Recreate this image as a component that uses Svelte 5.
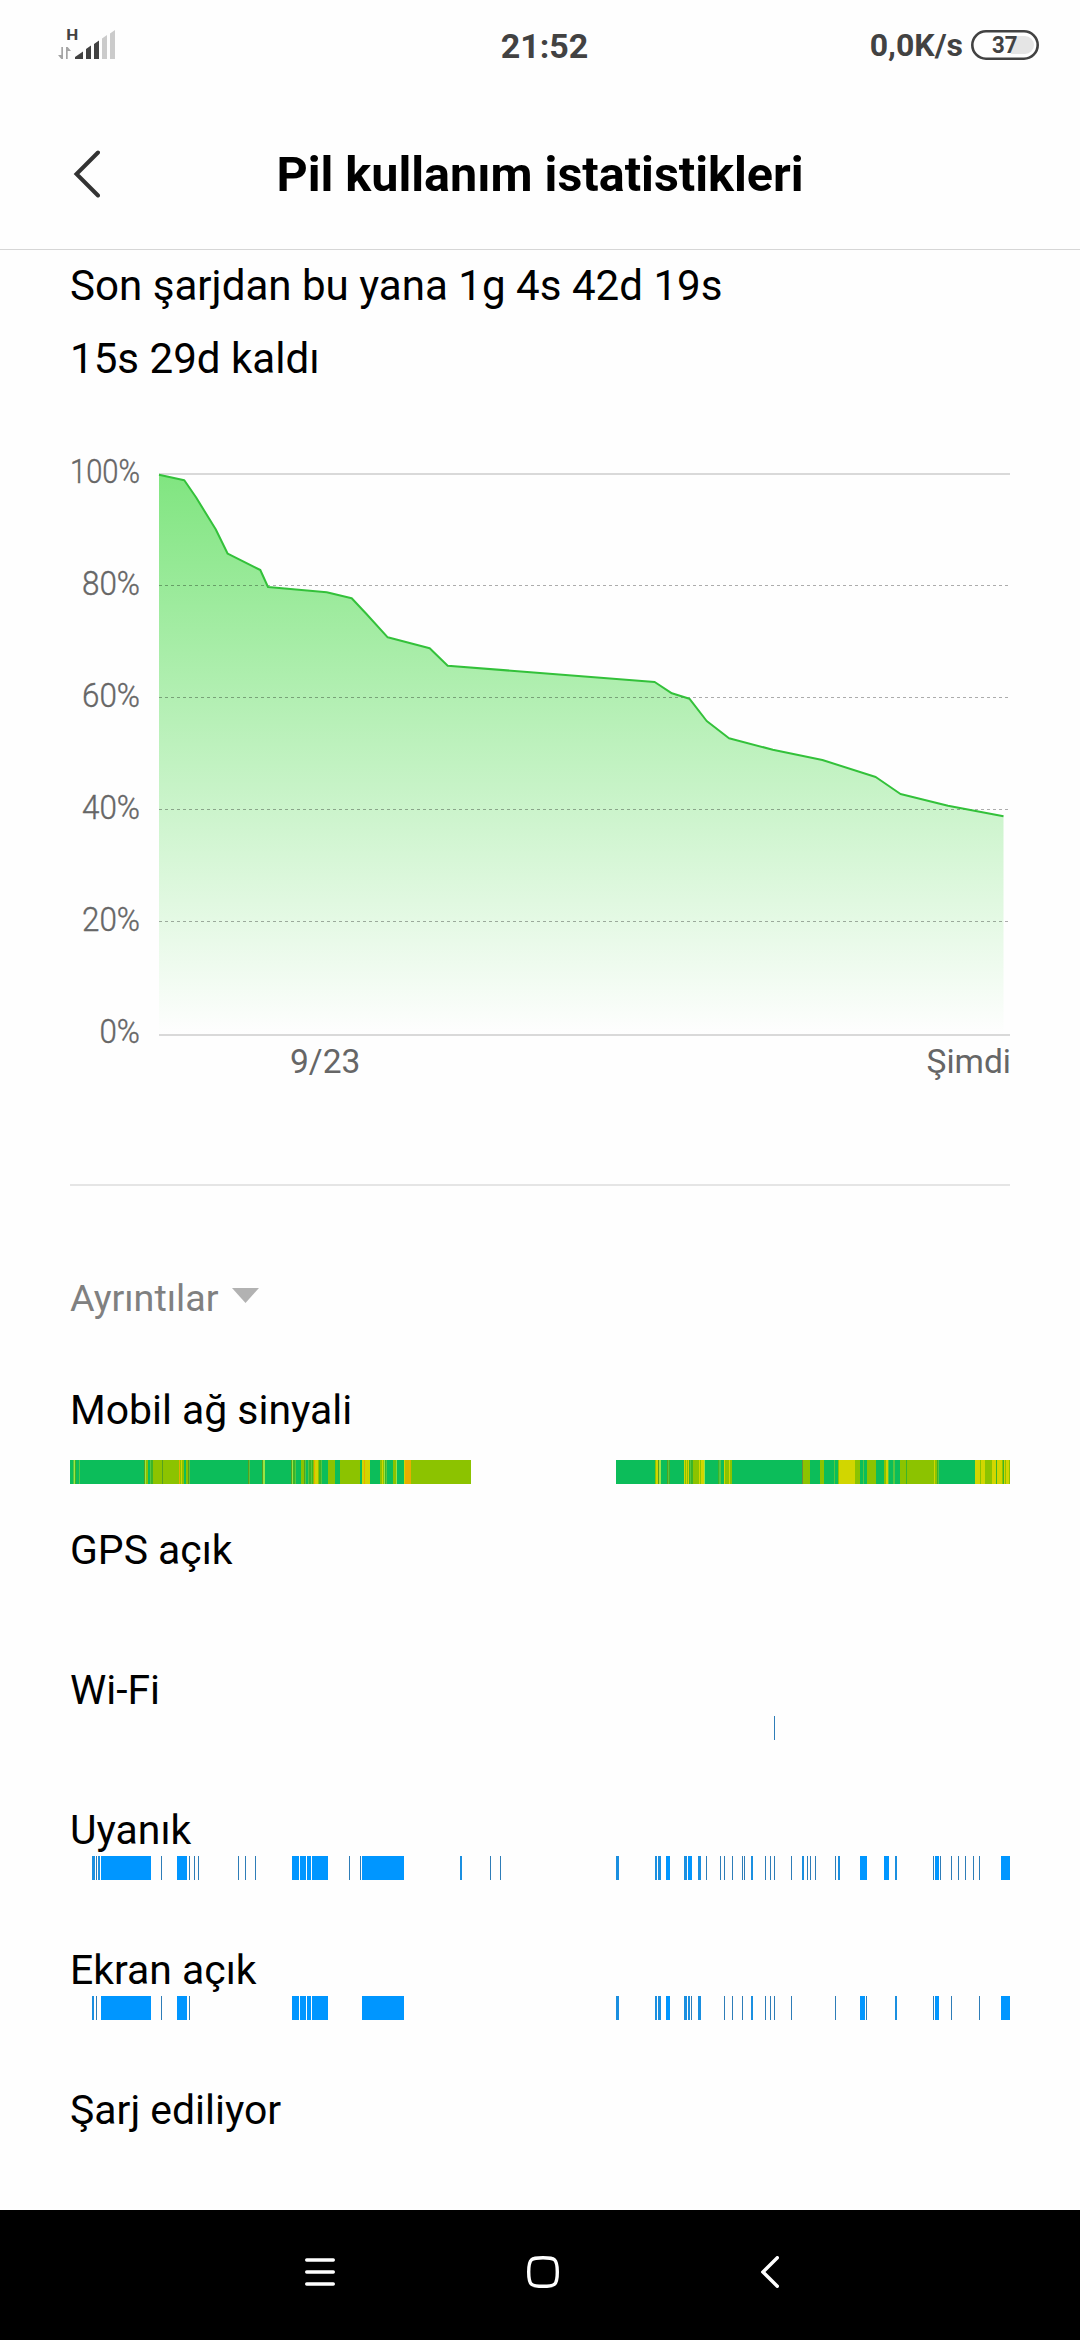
<script>
  const levels = [100, 80, 60, 40, 20, 0];

  // battery level over time, chart pixels
  const history = [
    [0, 1.7], [25.3, 7.3], [37, 24.3], [56.7, 56.3], [68.7, 80.7], [101.3, 97], [109, 114],
    [167.7, 119.3], [192.7, 125.3], [207.7, 141.3], [228.7, 164.3], [270.7, 175.3], [288.7, 192.7],
    [381, 200], [495.7, 209], [512.9, 220.3], [530.4, 225.7], [547.7, 248], [570, 265.3],
    [613.8, 276.7], [663.4, 287], [716.7, 304], [741.5, 321], [789, 332.7], [844.5, 343.3],
  ];
  const line = history.map((p) => p.join(",")).join(" ");
  const area = `0,561 ${line} 844.5,561`;

  const signalColors = {
    G: "#0cbd5a",
    l: "#55c840",
    L: "#9ae545",
    D: "#3cb428",
    d: "#56a01e",
    O: "#8cc300",
    Y: "#d2d600",
    R: "#e8ae00",
    B: "#6f8a3a",
    _: "none",
  };

  // start offset + signal level, each one lasts until the next
  const signalLog =
    "0G 3l 4L 5D 6G 9l 10G 74d 75L 76O 78G 80l 81D 83O 92d 93O 109R 110O 111Y 112O 114G 116O 118d 119l 120G " +
    "178d 179l 180G 192d 193L 195G 221d 222L 223D 225l 226G 231O 234d 235l 236G 238l 239D 241l 242D 243O 244R " +
    "245Y 248O 249D 251l 252G 258O 265G 270O 290G 292Y 294R 295Y 300G 310O 312Y 313O 314L 315D 316l 317G 323O " +
    "326L 327G 334Y 335R 341O 401_ 546G 585O 586Y 588d 589L 591G 597d 598l 599D 600G 614Y 615O 616Y 617O 618Y " +
    "619D 620l 621D 623O 629Y 630O 631Y 634L 635G 648D 649l 651G 654Y 655O 659Y 660O 662G 732B 733O 740G 750O " +
    "754G 764l 765G 768O 769Y 785O 790G 793l 794G 797O 806G 814O 816Y 818l 819G 823l 825G 830O 836D 837O 864Y " +
    "865O 867D 868l 869G 905Y 910O 911Y 915O 922Y 926D 927Y 932O 933D 934Y 935O 936Y 939O 940_";

  function parseSignal(log) {
    const marks = log.split(" ").map((m) => [parseInt(m), m.slice(-1)]);
    return marks
      .slice(0, -1)
      .map(([x, level], i) => ({ x, w: marks[i + 1][0] - x, fill: signalColors[level] }))
      .filter((s) => s.fill !== "none");
  }

  // "from-to", or a single one pixel mark
  function parseMarks(log) {
    return log.split(" ").map((m) => {
      const [from, to = from + 1] = m.split("-").map(Number);
      const w = to - from;
      return { x: from, w, fill: w < 2 ? "#2e7db8" : w < 4 ? "#1a8fe0" : "#0096ff" };
    });
  }

  const rows = [
    { label: "Mobil ağ sinyali", low: true, bars: parseSignal(signalLog) },
    { label: "GPS açık", bars: [] },
    { label: "Wi-Fi", bars: parseMarks("704") },
    {
      label: "Uyanık",
      bars: parseMarks(
        "22-25 26 28-30 31-81 91 107-117 119 124 128 168 175 185 222-229 230-236 237-241 242-258 279 290 " +
        "292-334 390-392 420 430 546-549 585-587 588-591 596-600 614-617 618-622 628-631 636 650 654 662 672 " +
        "674 681-683 695 700 704 721 732-734 737 740 745 765 768-770 790-797 814-819 825-827 863 865-869 870 " +
        "881 888 895 903 909 931-940"
      ),
    },
    {
      label: "Ekran açık",
      bars: parseMarks(
        "22-24 26 31-81 91 107-117 119 222-229 230-236 237-241 242-258 292-334 546-549 585-587 588-591 " +
        "596-600 614-617 618-620 621 628-631 654 662 672 681-683 695 700 704 721 765 790-795 796 825-827 863 " +
        "865-869 881 909 931-940"
      ),
    },
    { label: "Şarj ediliyor", bars: [] },
  ];
</script>

<div class="screen">
  <div class="status">
    <svg width="60" height="46" viewBox="0 -6 60 46">
      <text class="network" x="8.300" y="12" textLength="12" lengthAdjust="spacingAndGlyphs">H</text>
      <path class="arrows" d="M5 19v12h-1.700l-3.300-4h3.300v-8zM8 31v-12h1.700l3.300 4h-3.300v8z" />
      <path d="M17 31v-2l8-5.500v7.500zM28 31v-10l5-3.500v13.500zM36 31v-15l5-3.500v18.500z" />
      <path class="off" d="M44 31v-20.500l5-3.500v24zM52 31v-25.500l5-3.500v29z" />
    </svg>
    <span class="time">21:52</span>
    <div class="right">
      <span class="speed">0,0K/s</span>
      <svg width="68" height="30" viewBox="0 0 68 30">
        <path class="charge" d="M40 6h14a9 9 0 0 1 0 18h-14z" />
        <rect class="case" x="1.300" y="1.300" width="65.400" height="27.400" rx="13.700" />
        <text x="21" y="23.300" textLength="25.500" lengthAdjust="spacingAndGlyphs">37</text>
      </svg>
    </div>
  </div>

  <header>
    <svg class="back" width="28" height="50" viewBox="0 0 28 50">
      <path d="M26 3.500L4.500 25L26 46.500" />
    </svg>
    <h1>Pil kullanım istatistikleri</h1>
  </header>

  <main>
    <p>Son şarjdan bu yana 1g 4s 42d 19s</p>
    <p>15s 29d kaldı</p>

    <svg class="chart" width="940" height="640" viewBox="0 0 940 640">
      <defs>
        <linearGradient id="fade" x1="0" y1="0" x2="0" y2="561" gradientUnits="userSpaceOnUse">
          <stop offset="0" stop-color="#80e580" />
          <stop offset="1" stop-color="#fefefe" />
        </linearGradient>
      </defs>
      {#each levels as level, i}
        <text
          class="level"
          x="70"
          y={33 + i * 112}
          textLength={level === 100 ? 70 : level === 0 ? 40.500 : 58}
          lengthAdjust="spacingAndGlyphs">{level}%</text>
      {/each}
      <g transform="translate(89 23)">
        <path class="edge" d="M0 1h851M0 562h851" />
        <polygon points={area} fill="url(#fade)" />
        <path class="grid" d="M0 112.500h851M0 224.500h851M0 336.500h851M0 448.500h851" />
        <polyline points={line} />
      </g>
      <text x="220" y="623">9/23</text>
      <text x="941" y="623" text-anchor="end">Şimdi</text>
    </svg>

    <div class="details">
      <span>Ayrıntılar</span>
      <svg width="27" height="15" viewBox="0 0 27 15"><path d="M0 0h27L13.500 15z" /></svg>
    </div>

    {#each rows as row}
      <section>
        <h2>{row.label}</h2>
        <svg class="strip" class:low={row.low} width="940" height="24" viewBox="0 0 940 24">
          {#each row.bars as bar}
            <rect x={bar.x} y="0" width={bar.w} height="24" fill={bar.fill} />
          {/each}
        </svg>
      </section>
    {/each}
  </main>

  <nav>
    <svg width="30" height="32" viewBox="0 0 30 32">
      <path d="M1.700 4h26.600M1.700 16h26.600M1.700 28h26.600" />
    </svg>
    <svg class="home" width="32" height="32" viewBox="0 0 32 32">
      <path d="M16 1.700c11.500 0 14.300.5 14.300 14.300s-2.800 14.300-14.300 14.300S1.700 29.800 1.700 16 4.500 1.700 16 1.700z" />
    </svg>
    <svg width="18" height="32" viewBox="0 0 18 32">
      <path d="M16.300 1.700L2 16l14.300 14.300" />
    </svg>
  </nav>
</div>

<style>
  :global(body) {
    background: #fff;
  }

  .screen {
    display: grid;
    grid-template-rows: 90px 160px 1960px 130px;
    width: 1080px;
    height: 2340px;
    overflow: hidden;
    background: #fefefe;
    font-family: Roboto, sans-serif;
    color: #000;
  }

  svg {
    display: block;
    flex: none;
  }

  .status {
    display: grid;
    grid-template-columns: 1fr auto 1fr;
    align-items: center;
    padding: 0 41px 0 58px;
    color: #424242;
    fill: #424242;
  }

  .network {
    font-size: 15px;
    font-weight: 700;
  }

  .arrows {
    fill: #a5a5a5;
  }

  .off {
    fill: #cbcbcb;
  }

  .time {
    padding: 1px 8px 0 0;
    font-size: 34px;
    font-weight: 700;
    line-height: 44px;
  }

  .right {
    display: flex;
    justify-content: flex-end;
    align-items: center;
    gap: 8px;
  }

  .speed {
    font-size: 32px;
    font-weight: 700;
    line-height: 44px;
  }

  .case {
    fill: none;
    stroke: #424242;
    stroke-width: 2.6;
  }

  .charge {
    fill: #e5e5e5;
  }

  .right text {
    font-size: 23.5px;
    font-weight: 700;
  }

  header {
    display: grid;
    grid-template-columns: 100px 1fr 100px;
    align-items: center;
    padding-top: 10px;
    border-bottom: 1px solid #d6d6d6;
  }

  .back {
    justify-self: end;
    padding-bottom: 2px;
  }

  .back path {
    fill: none;
    stroke: #333;
    stroke-width: 4;
    stroke-linecap: round;
  }

  h1 {
    margin: 0;
    font-size: 48.5px;
    font-weight: 700;
    line-height: 60px;
    text-align: center;
  }

  main {
    padding: 0 70px;
    overflow: hidden;
  }

  p {
    margin: 0;
    font-size: 42.1px;
    line-height: 73px;
  }

  p:first-child {
    margin-top: -1px;
  }

  .chart {
    margin-top: 55px;
  }

  .chart text {
    font-size: 33.5px;
    fill: #666;
  }

  .chart .level {
    font-weight: 300;
    stroke: #666;
    stroke-width: 0.4;
    text-anchor: end;
  }

  .edge {
    stroke: #d9d9d9;
    stroke-width: 2;
  }

  .grid {
    stroke: #000;
    stroke-opacity: 0.32;
    stroke-dasharray: 3 3;
  }

  polyline {
    fill: none;
    stroke: #33c13a;
    stroke-width: 2;
    stroke-linejoin: round;
  }

  .details {
    display: flex;
    align-items: center;
    gap: 13px;
    box-sizing: border-box;
    height: 202px;
    margin-top: 94px;
    padding-top: 24px;
    border-top: 2px solid #e5e5e5;
    font-size: 37.7px;
    color: #808080;
    fill: #b2b2b2;
  }

  .details svg {
    margin-bottom: 5px;
  }

  section {
    height: 140px;
  }

  h2 {
    margin: 0;
    font-size: 40.9px;
    font-weight: 400;
    line-height: 48px;
  }

  .strip {
    margin-top: 2px;
    shape-rendering: crispEdges;
  }

  .low {
    margin-top: 26px;
  }

  nav {
    display: flex;
    justify-content: space-between;
    align-items: center;
    padding: 0 301px 6px 305px;
    background: #000;
  }

  nav path {
    fill: none;
    stroke: #fff;
    stroke-width: 3.4;
    stroke-linecap: round;
  }

  .home {
    margin-right: 10px;
  }
</style>
